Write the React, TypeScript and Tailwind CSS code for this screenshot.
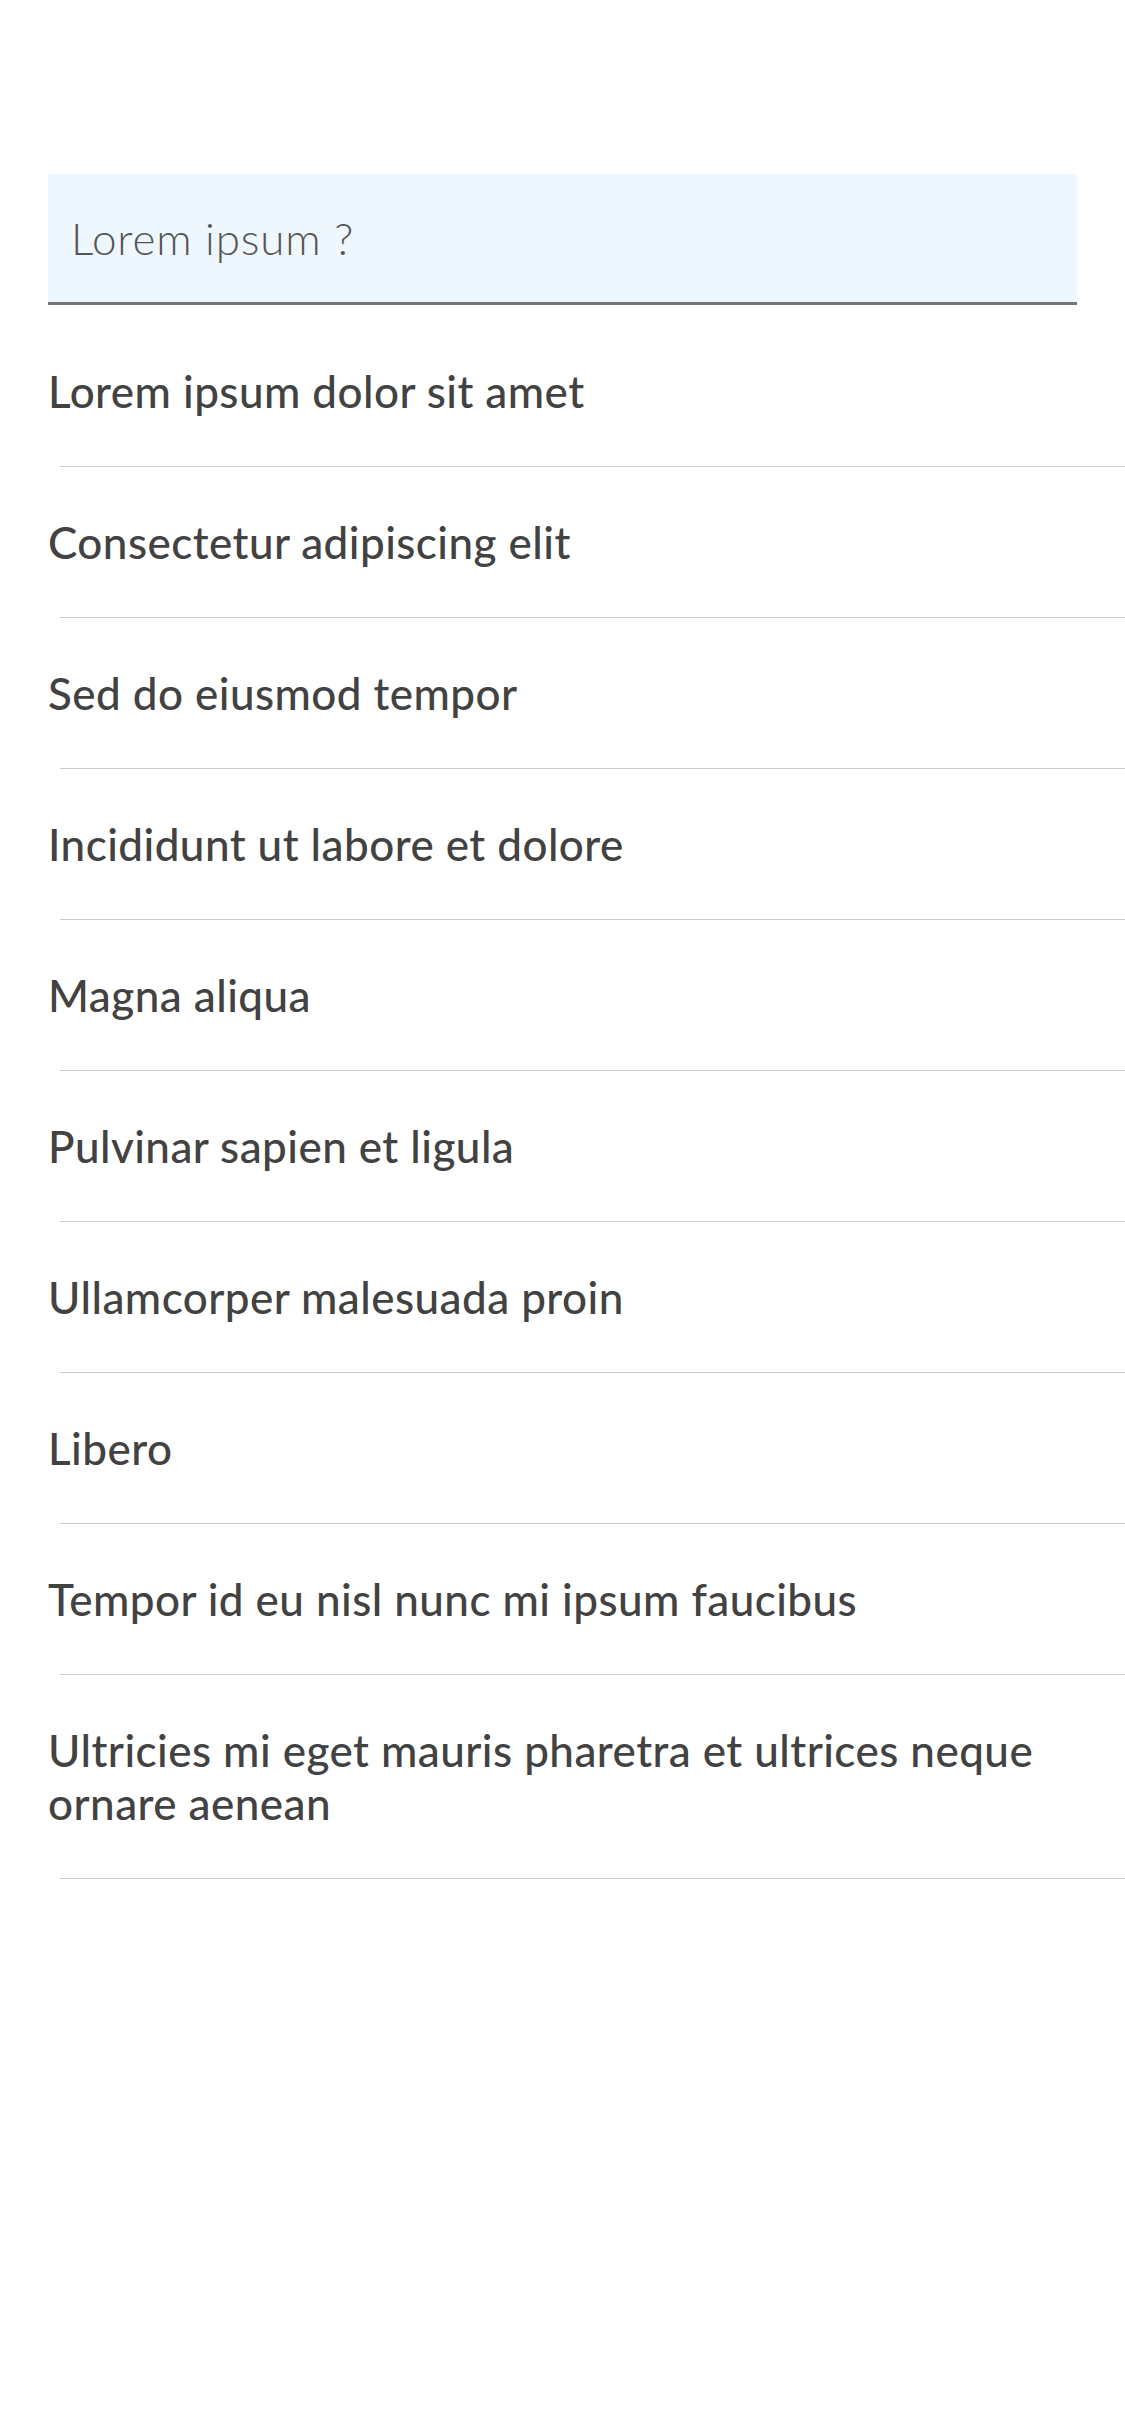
const ITEMS = [
  'Lorem ipsum dolor sit amet',
  'Consectetur adipiscing elit',
  'Sed do eiusmod tempor',
  'Incididunt ut labore et dolore',
  'Magna aliqua',
  'Pulvinar sapien et ligula',
  'Ullamcorper malesuada proin',
  'Libero',
  'Tempor id eu nisl nunc mi ipsum faucibus',
  'Ultricies mi eget mauris pharetra et ultrices neque ornare aenean',
];

export default function App() {
  return (
    <div className="min-h-[2436px] w-[1125px] bg-white pt-[174px] font-['Lato',sans-serif]">
      <div className="mx-[48px] mb-[11px]">
        <input
          type="text"
          placeholder="Lorem ipsum ?"
          className="block h-[131px] w-full border-b-[3px] border-[#757575] bg-[#eff7fe] px-[23px] text-[44px] font-light tracking-[0.8px] text-[#444] outline-none placeholder:text-[#555]"
        />
      </div>
      <ul>
        {ITEMS.map((item) => (
          <li key={item} className="pl-[60px]">
            <div className="border-b border-[#cccccc] pt-[49px] pb-[48px] pr-[48px]">
              <p className="-ml-[12px] text-[44px] leading-[53px] font-medium tracking-[0.45px] text-[#424242]">
                {item}
              </p>
            </div>
          </li>
        ))}
      </ul>
    </div>
  );
}
